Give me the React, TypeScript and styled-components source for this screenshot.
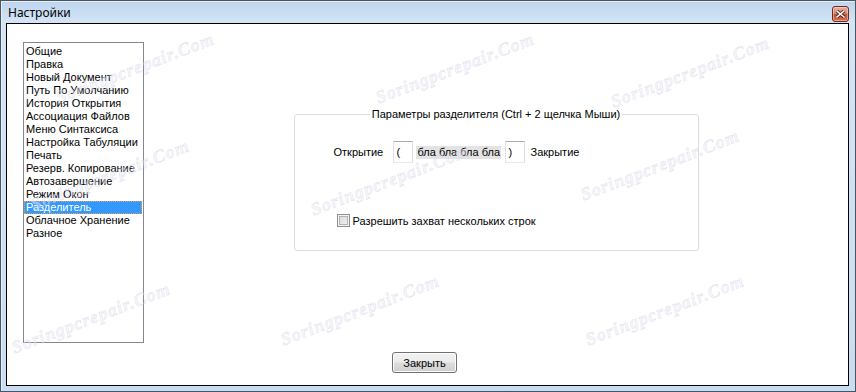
import {FC} from 'react'
import styled, {createGlobalStyle} from 'styled-components'

const GlobalStyle = createGlobalStyle`
  html, body {
    margin: 0;
    padding: 0;
    background: #fff;
  }

  body {
    font-family: "Liberation Sans", Arial, sans-serif;
    font-size: 11px;
    color: #000;
  }
`

const sections = [
   'Общие',
   'Правка',
   'Новый Документ',
   'Путь По Умолчанию',
   'История Открытия',
   'Ассоциация Файлов',
   'Меню Синтаксиса',
   'Настройка Табуляции',
   'Печать',
   'Резерв. Копирование',
   'Автозавершение',
   'Режим Окон',
   'Разделитель',
   'Облачное Хранение',
   'Разное',
]

// centres of the watermark stamps, in client coordinates
const marks = [
   {x: 128, y: 44}, {x: 448, y: 44}, {x: 683, y: 48},
   {x: 103, y: 151}, {x: 383, y: 156}, {x: 653, y: 141},
   {x: 84, y: 294}, {x: 353, y: 286}, {x: 658, y: 286},
]

const App: FC = () => {
   return (
      <>
         <GlobalStyle/>
         <Window>
            <TitleBar>
               <Title>Настройки</Title>
               <CloseButton>
                  <svg width="9" height="8" viewBox="0 0 9 8">
                     <path d="M1 1 L8 7 M8 1 L1 7" stroke="#4a1a10" strokeWidth="3.2" strokeLinecap="square"/>
                     <path d="M1 1 L8 7 M8 1 L1 7" stroke="#fff" strokeWidth="1.6" strokeLinecap="square"/>
                  </svg>
               </CloseButton>
            </TitleBar>
            <Client>
               <Content>
                  <ListBox>
                     {sections.map((s) => (
                        <ListItem key={s} selected={s === 'Разделитель'}>{s}</ListItem>
                     ))}
                  </ListBox>
                  <Main>
                     <GroupBox>
                        <Legend>Параметры разделителя (Ctrl + 2 щелчка Мыши)</Legend>
                        <DelimRow>
                           <RowLabel $w={59}>Открытие</RowLabel>
                           <CharBox>(</CharBox>
                           <Sample>бла бла бла бла</Sample>
                           <CharBox>)</CharBox>
                           <RowLabel $gap={6}>Закрытие</RowLabel>
                        </DelimRow>
                        <CheckRow>
                           <CheckBox/>
                           <span>Разрешить захват нескольких строк</span>
                        </CheckRow>
                     </GroupBox>
                  </Main>
               </Content>
               <Footer>
                  <PushButton>Закрыть</PushButton>
               </Footer>
               <Watermarks>
                  {marks.map((m, i) => (
                     <Mark key={i} style={{left: m.x, top: m.y}}>Soringpcrepair.Com</Mark>
                  ))}
               </Watermarks>
            </Client>
         </Window>
      </>
   )
}

export default App

const Window = styled.div`
  width: 856px;
  height: 392px;
  box-sizing: border-box;
  border: 1px solid #4b5560;
  padding: 0 6px 5px 5px;
  display: flex;
  flex-direction: column;
  background: linear-gradient(180deg, #bed5ed 0px, #d4e5f6 22px, #c9ddf2 100%);
  box-shadow: inset 1px 1px 0 #e6f0fa;
`

const TitleBar = styled.div`
  height: 22px;
  display: flex;
  align-items: center;
  justify-content: space-between;
  padding: 0 0 0 2px;
`

const Title = styled.span`
  font-family: "Noto Sans", "Liberation Sans", sans-serif;
  font-size: 12px;
  color: #000;
  margin-top: 1px;
`

const CloseButton = styled.div`
  width: 15px;
  height: 14px;
  margin-top: 4px;
  border: 1px solid #6e2a1e;
  border-radius: 3px;
  background: linear-gradient(180deg, #eab3a4 0%, #d9826d 45%, #c44a32 55%, #d7705a 100%);
  display: flex;
  align-items: center;
  justify-content: center;
  box-shadow: inset 0 0 0 1px rgba(255, 220, 210, 0.5);
`

const Client = styled.div`
  position: relative;
  flex: 1;
  border: 1px solid #000;
  background: #fff;
  display: flex;
  flex-direction: column;
  overflow: hidden;
`

const Content = styled.div`
  display: flex;
  padding: 18px 0 0 16px;
`

const ListBox = styled.div`
  width: 121px;
  height: 301px;
  box-sizing: border-box;
  border: 1px solid #828790;
  padding: 2px 1px 0 0;
`

const ListItem = styled.div<{ selected?: boolean }>`
  height: 13px;
  line-height: 13px;
  padding-left: 2px;
  white-space: nowrap;
  color: ${(p) => (p.selected ? '#fff' : '#000')};
  background: ${(p) => (p.selected ? '#3399ff' : 'transparent')};
  outline: ${(p) => (p.selected ? '1px dotted #f0a040' : 'none')};
  outline-offset: -1px;
`

const Main = styled.div`
  flex: 1;
  display: flex;
  justify-content: center;
  padding-top: 66px;
`

const GroupBox = styled.fieldset`
  width: 405px;
  height: 143px;
  box-sizing: border-box;
  margin: 0;
  padding: 0;
  min-width: 0;
  border: 1px solid #d5dfe5;
  border-radius: 3px;
`

const Legend = styled.legend`
  margin: 0 auto;
  padding: 0 2px;
  line-height: 13px;
  font-size: 11px;
`

const DelimRow = styled.div`
  display: flex;
  align-items: center;
  margin-top: 20px;
  padding-left: 39px;
`

const RowLabel = styled.span<{ $w?: number; $gap?: number }>`
  width: ${(p) => (p.$w ? `${p.$w}px` : 'auto')};
  margin-left: ${(p) => p.$gap ?? 0}px;
  white-space: nowrap;
`

const CharBox = styled.div`
  width: 20px;
  height: 22px;
  box-sizing: border-box;
  border: 1px solid #abadb3;
  border-color: #abadb3 #dbdfe6 #e3e9ef #e2e3ea;
  padding-left: 3px;
  line-height: 20px;
`

const Sample = styled.span`
  width: 85px;
  box-sizing: border-box;
  margin: 0 4px 0 3px;
  background: #e3e3e3;
  line-height: 13px;
  padding-left: 2px;
  white-space: nowrap;
`

const CheckRow = styled.label`
  display: flex;
  align-items: center;
  gap: 3px;
  margin-top: 51px;
  padding-left: 42px;
`

const CheckBox = styled.span`
  width: 13px;
  height: 13px;
  box-sizing: border-box;
  border: 1px solid #8e8f8f;
  background: linear-gradient(135deg, #d6d6d6 0%, #f4f4f4 100%);
  box-shadow: inset 0 0 0 1px #f4f4f4, inset 0 0 0 2px #aeb3b9;
`

const Footer = styled.div`
  display: flex;
  justify-content: center;
  padding: 9px 6px 0 0;
`

const PushButton = styled.button`
  width: 65px;
  height: 21px;
  border: 1px solid #707070;
  border-radius: 3px;
  background: linear-gradient(180deg, #f2f2f2 0%, #ebebeb 48%, #dddddd 52%, #cfcfcf 100%);
  box-shadow: inset 0 0 0 1px #fcfcfc;
  font-family: "Liberation Sans", Arial, sans-serif;
  font-size: 11px;
  color: #000;
  padding: 0;
`

const Watermarks = styled.div`
  position: absolute;
  inset: 0;
  pointer-events: none;
`

const Mark = styled.span`
  position: absolute;
  font-family: "Liberation Serif", serif;
  font-style: italic;
  font-weight: bold;
  font-size: 18px;
  letter-spacing: 1px;
  line-height: 20px;
  color: rgba(236, 236, 246, 0.5);
  -webkit-text-stroke: 0.5px rgba(165, 165, 200, 0.28);
  transform: translate(-50%, -50%) rotate(-21deg);
  white-space: nowrap;
`
